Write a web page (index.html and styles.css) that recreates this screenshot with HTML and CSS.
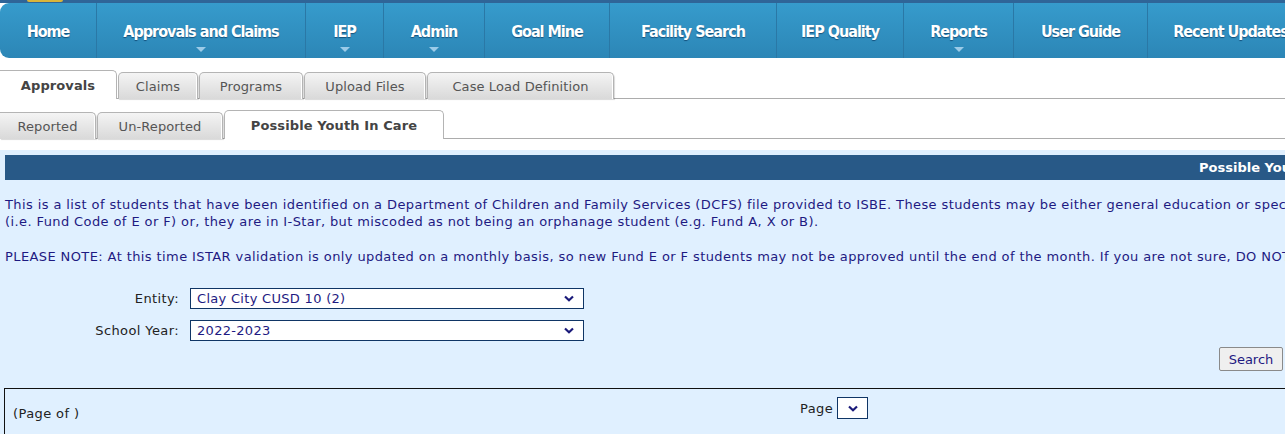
FILE: index.html
```html
<!DOCTYPE html>
<html>
<head>
<meta charset="utf-8">
<link rel="stylesheet" href="styles.css">
</head>
<body>
<div class="topstrip"><span class="logo"></span></div>
<nav class="nav">
  <a class="nav-item nav-home">Home</a>
  <a class="nav-item has-sub nav-appr">Approvals and Claims</a>
  <a class="nav-item has-sub nav-iep">IEP</a>
  <a class="nav-item has-sub nav-admin">Admin</a>
  <a class="nav-item nav-goal">Goal Mine</a>
  <a class="nav-item nav-fac">Facility Search</a>
  <a class="nav-item nav-qual">IEP Quality</a>
  <a class="nav-item has-sub nav-rep">Reports</a>
  <a class="nav-item nav-guide">User Guide</a>
  <a class="nav-item nav-recent">Recent Updates</a>
</nav>

<div class="tabs tabs-main">
  <span class="tab active t-appr">Approvals</span>
  <span class="tab t-claims">Claims</span>
  <span class="tab t-prog">Programs</span>
  <span class="tab t-upload">Upload Files</span>
  <span class="tab t-case">Case Load Definition</span>
</div>

<div class="tabs tabs-sub">
  <span class="tab t-rep">Reported</span>
  <span class="tab t-unrep">Un-Reported</span>
  <span class="tab active t-youth">Possible Youth In Care</span>
</div>

<div class="panel">
  <div class="section-title">Possible Youth In Care</div>
  <p class="info">This is a list of students that have been identified on a Department of Children and Family Services (DCFS) file provided to ISBE. These students may be either general education or special education students that are not in I-Star<br>(i.e. Fund Code of E or F) or, they are in I-Star, but miscoded as not being an orphanage student (e.g. Fund A, X or B).</p>
  <p class="info">PLEASE NOTE: At this time ISTAR validation is only updated on a monthly basis, so new Fund E or F students may not be approved until the end of the month. If you are not sure, DO NOT approve the student.</p>

  <div class="form">
    <div class="form-row">
      <label class="form-label">Entity:</label>
      <div class="select select-wide"><span>Clay City CUSD 10 (2)</span><svg class="chev" viewBox="0 0 10 7" width="10" height="7"><path d="M1 1.5 L5 5.2 L9 1.5" fill="none" stroke="#1a1a7a" stroke-width="2.2"/></svg></div>
    </div>
    <div class="form-row">
      <label class="form-label">School Year:</label>
      <div class="select select-wide"><span>2022-2023</span><svg class="chev" viewBox="0 0 10 7" width="10" height="7"><path d="M1 1.5 L5 5.2 L9 1.5" fill="none" stroke="#1a1a7a" stroke-width="2.2"/></svg></div>
    </div>
  </div>
  <div class="actions"><button class="btn">Search</button></div>

  <div class="results">
    <span class="page-of">(Page of )</span>
    <div class="pager"><span>Page</span><div class="select select-small"><svg class="chev" viewBox="0 0 10 7" width="10" height="7"><path d="M1 1.5 L5 5.2 L9 1.5" fill="none" stroke="#1a1a7a" stroke-width="2.2"/></svg></div></div>
  </div>
</div>
</body>
</html>
```

FILE: styles.css
```css
html, body {
  margin: 0;
  padding: 0;
  background: #ffffff;
  overflow: hidden;
  width: 1285px;
  height: 434px;
}
body {
  font-family: "DejaVu Sans", Verdana, sans-serif;
  font-size: 13px;
  letter-spacing: 0.4px;
}

.topstrip {
  height: 3px;
  background: #2f6598;
  position: relative;
}
.logo {
  position: absolute;
  left: 27px;
  top: 0;
  width: 36px;
  height: 2px;
  background: #d9b53a;
  border-radius: 0 0 18px 18px;
}

.nav {
  display: flex;
  height: 55px;
  background: linear-gradient(#369bcc, #2c86b6);
  border-radius: 9px 0 0 9px;
  white-space: nowrap;
}
.nav-item {
  position: relative;
  display: flex;
  align-items: center;
  justify-content: center;
  flex: none;
  height: 100%;
  box-sizing: border-box;
  color: #ffffff;
  font-family: "DejaVu Sans Condensed", "DejaVu Sans", sans-serif;
  font-weight: bold;
  font-size: 16px;
  letter-spacing: -1px;
  text-shadow: 0 1px 1px rgba(0, 40, 80, 0.6);
  border-right: 1px solid #2a78a6;
  padding-top: 2px;
}
.nav-home { width: 97px; }
.nav-appr { width: 209px; }
.nav-iep { width: 78px; }
.nav-admin { width: 101px; }
.nav-goal { width: 125px; }
.nav-fac { width: 167px; }
.nav-qual { width: 127px; }
.nav-rep { width: 110px; }
.nav-guide { width: 134px; }
.nav-recent { width: 165px; border-right: none; }
.has-sub::after {
  content: "";
  position: absolute;
  left: 50%;
  top: 44px;
  margin-left: -5px;
  border-left: 5px solid transparent;
  border-right: 5px solid transparent;
  border-top: 5px solid #9ccbe8;
}

.tabs {
  display: flex;
  align-items: flex-end;
  height: 28px;
  border-bottom: 1px solid #acacac;
  font-size: 13px;
  letter-spacing: 0.1px;
  color: #555555;
}
.tabs-main { margin-top: 12px; }
.tabs-sub { margin-top: 11px; }
.tab {
  display: flex;
  align-items: center;
  justify-content: center;
  box-sizing: border-box;
  height: 27px;
  margin-bottom: -1px;
  border: 1px solid #b4b4b4;
  border-bottom: none;
  border-radius: 5px 5px 0 0;
  background: linear-gradient(#f4f4f4, #d9d9d9);
  box-shadow: inset -1px 0 0 #ffffff, 1px 1px 1px rgba(0,0,0,0.15);
  margin-right: 1px;
}
.tab.active {
  height: 29px;
  background: #ffffff;
  border-color: #b4b4b4;
  box-shadow: none;
  font-weight: bold;
  color: #444444;
}
.t-appr { width: 117px; border-left: none; border-radius: 0 5px 0 0; }
.t-claims { width: 80px; }
.t-prog { width: 104px; }
.t-upload { width: 122px; }
.t-case { width: 187px; }
.t-rep { width: 96px; border-left: none; border-radius: 0 5px 0 0; }
.t-unrep { width: 126px; }
.t-youth { width: 220px; }

.panel {
  margin-top: 11px;
  background: #e0f0ff;
  padding: 5px 0 0 5px;
  height: 300px;
  color: #1e1a82;
}
.section-title {
  height: 25px;
  line-height: 26px;
  background: #285987;
  color: #ffffff;
  font-weight: bold;
  font-size: 13px;
  letter-spacing: 0;
  white-space: nowrap;
  overflow: hidden;
  padding-left: 1194px;
}
.info {
  margin: 16px 0 0;
  line-height: 17px;
  white-space: nowrap;
}
.info + .info { margin-top: 18px; }

.form {
  margin-top: 23px;
  display: flex;
  flex-direction: column;
  gap: 11px;
}
.form-row {
  display: flex;
  align-items: center;
  gap: 11px;
}
.form-label {
  width: 174px;
  text-align: right;
  color: #222222;
}
.select {
  display: flex;
  align-items: center;
  justify-content: space-between;
  box-sizing: border-box;
  border: 1px solid #0f3565;
  background: #ffffff;
  color: #1e1a82;
  height: 21px;
  padding: 0 9px 0 6px;
  letter-spacing: 0.3px;
}
.select-wide { width: 394px; }
.chev { display: block; }

.actions {
  display: flex;
  justify-content: flex-end;
  margin-top: 6px;
  padding-right: 2px;
}
.btn {
  font-family: "DejaVu Sans", Verdana, sans-serif;
  font-size: 13px;
  color: #1e1a82;
  background: #efefef;
  border: 1px solid #8a8a8a;
  border-radius: 2px;
  height: 24px;
  width: 64px;
  padding: 0;
}

.results {
  margin-top: 17px;
  margin-left: -1px;
  border: 1px solid #111111;
  border-right: none;
  height: 60px;
  position: relative;
  display: flex;
  align-items: flex-start;
  color: #222222;
}
.page-of {
  margin: 17px 0 0 8px;
  width: 787px;
}
.pager {
  display: flex;
  align-items: center;
  gap: 4px;
  margin-top: 8px;
}
.select-small {
  width: 31px;
  height: 22px;
  justify-content: center;
  padding: 0;
}
```
